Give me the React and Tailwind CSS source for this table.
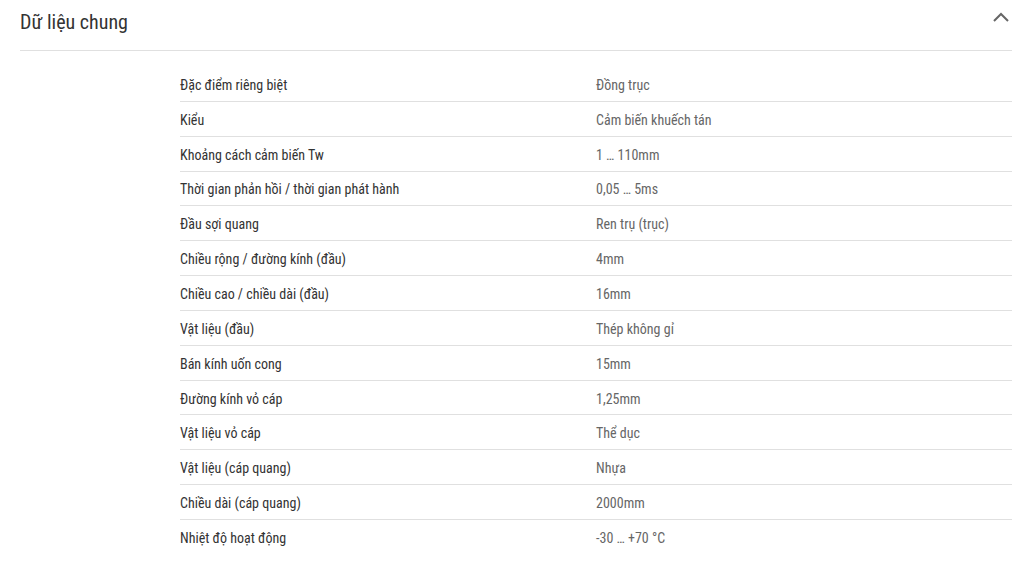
import React from "react";

const rows = [
  ["Đặc điểm riêng biệt", "Đồng trục"],
  ["Kiểu", "Cảm biến khuếch tán"],
  ["Khoảng cách cảm biến Tw", "1 … 110mm"],
  ["Thời gian phản hồi / thời gian phát hành", "0,05 … 5ms"],
  ["Đầu sợi quang", "Ren trụ (trục)"],
  ["Chiều rộng / đường kính (đầu)", "4mm"],
  ["Chiều cao / chiều dài (đầu)", "16mm"],
  ["Vật liệu (đầu)", "Thép không gỉ"],
  ["Bán kính uốn cong", "15mm"],
  ["Đường kính vỏ cáp", "1,25mm"],
  ["Vật liệu vỏ cáp", "Thể dục"],
  ["Vật liệu (cáp quang)", "Nhựa"],
  ["Chiều dài (cáp quang)", "2000mm"],
  ["Nhiệt độ hoạt động", "-30 … +70 °C"],
];

export default function App() {
  return (
    <div className="w-[1032px] h-[561px] bg-white px-5 font-['Roboto',sans-serif] font-stretch-[87.5%] overflow-hidden">
      <div className="flex items-center justify-between h-[51px] border-b border-[#e0e0e0]">
        <h2 className="text-[20px] text-[#333] pb-[7px]">Dữ liệu chung</h2>
        <svg width="18" height="12" viewBox="0 0 18 12" className="mr-[2px] mb-[17px]">
          <path d="M2 10 L9 3 L16 10" fill="none" stroke="#666" strokeWidth="2" />
        </svg>
      </div>
      <div className="ml-[160px] mt-[16px]">
        {rows.map(([k, v], i) => (
          <div
            key={i}
            className={`grid grid-cols-2 h-[34.85px] items-center text-[14px] pt-[3px] ${i < rows.length - 1 ? "border-b border-[#e0e0e0]" : ""}`}
          >
            <div className="text-[#333]">{k}</div>
            <div className="text-[#666]">{v}</div>
          </div>
        ))}
      </div>
    </div>
  );
}
